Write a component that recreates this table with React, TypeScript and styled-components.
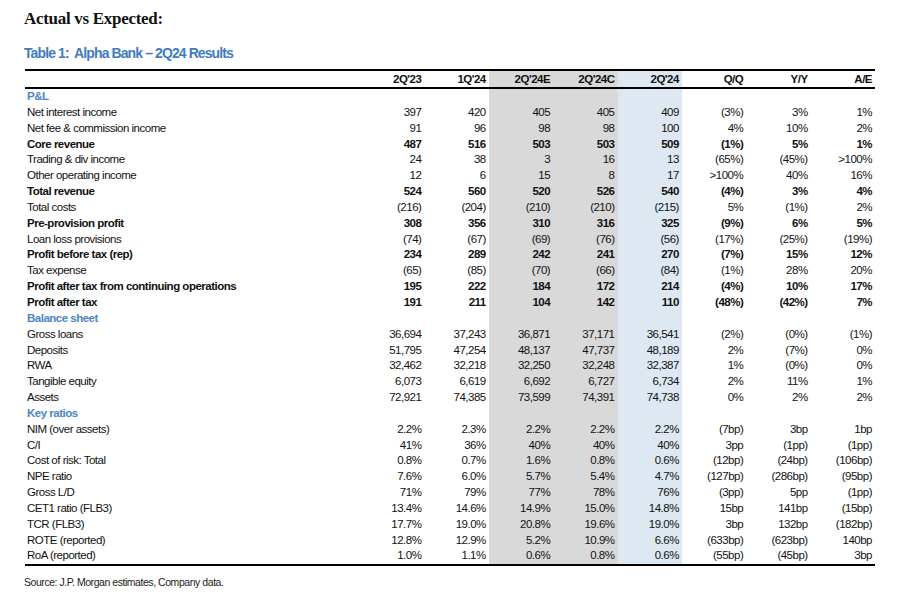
import styled, { createGlobalStyle } from 'styled-components';

type Shade = 'grey' | 'blue' | undefined;

type Row =
  | { kind: 'section'; label: string }
  | { kind: 'data'; label: string; values: string[]; bold?: boolean };

const columns = ["2Q'23", "1Q'24", "2Q'24E", "2Q'24C", "2Q'24", 'Q/Q', 'Y/Y', 'A/E'];

// columns 2 and 3 are the estimate block, 4 is the actual quarter
const shadeFor = (i: number): Shade => (i === 2 || i === 3 ? 'grey' : i === 4 ? 'blue' : undefined);

const rows: Row[] = [
  { kind: 'section', label: 'P&L' },
  { kind: 'data', label: 'Net interest income', values: ['397', '420', '405', '405', '409', '(3%)', '3%', '1%'] },
  { kind: 'data', label: 'Net fee & commission income', values: ['91', '96', '98', '98', '100', '4%', '10%', '2%'] },
  { kind: 'data', label: 'Core revenue', bold: true, values: ['487', '516', '503', '503', '509', '(1%)', '5%', '1%'] },
  { kind: 'data', label: 'Trading & div income', values: ['24', '38', '3', '16', '13', '(65%)', '(45%)', '>100%'] },
  { kind: 'data', label: 'Other operating income', values: ['12', '6', '15', '8', '17', '>100%', '40%', '16%'] },
  { kind: 'data', label: 'Total revenue', bold: true, values: ['524', '560', '520', '526', '540', '(4%)', '3%', '4%'] },
  { kind: 'data', label: 'Total costs', values: ['(216)', '(204)', '(210)', '(210)', '(215)', '5%', '(1%)', '2%'] },
  { kind: 'data', label: 'Pre-provision profit', bold: true, values: ['308', '356', '310', '316', '325', '(9%)', '6%', '5%'] },
  { kind: 'data', label: 'Loan loss provisions', values: ['(74)', '(67)', '(69)', '(76)', '(56)', '(17%)', '(25%)', '(19%)'] },
  { kind: 'data', label: 'Profit before tax (rep)', bold: true, values: ['234', '289', '242', '241', '270', '(7%)', '15%', '12%'] },
  { kind: 'data', label: 'Tax expense', values: ['(65)', '(85)', '(70)', '(66)', '(84)', '(1%)', '28%', '20%'] },
  { kind: 'data', label: 'Profit after tax from continuing operations', bold: true, values: ['195', '222', '184', '172', '214', '(4%)', '10%', '17%'] },
  { kind: 'data', label: 'Profit after tax', bold: true, values: ['191', '211', '104', '142', '110', '(48%)', '(42%)', '7%'] },
  { kind: 'section', label: 'Balance sheet' },
  { kind: 'data', label: 'Gross loans', values: ['36,694', '37,243', '36,871', '37,171', '36,541', '(2%)', '(0%)', '(1%)'] },
  { kind: 'data', label: 'Deposits', values: ['51,795', '47,254', '48,137', '47,737', '48,189', '2%', '(7%)', '0%'] },
  { kind: 'data', label: 'RWA', values: ['32,462', '32,218', '32,250', '32,248', '32,387', '1%', '(0%)', '0%'] },
  { kind: 'data', label: 'Tangible equity', values: ['6,073', '6,619', '6,692', '6,727', '6,734', '2%', '11%', '1%'] },
  { kind: 'data', label: 'Assets', values: ['72,921', '74,385', '73,599', '74,391', '74,738', '0%', '2%', '2%'] },
  { kind: 'section', label: 'Key ratios' },
  { kind: 'data', label: 'NIM (over assets)', values: ['2.2%', '2.3%', '2.2%', '2.2%', '2.2%', '(7bp)', '3bp', '1bp'] },
  { kind: 'data', label: 'C/I', values: ['41%', '36%', '40%', '40%', '40%', '3pp', '(1pp)', '(1pp)'] },
  { kind: 'data', label: 'Cost of risk: Total', values: ['0.8%', '0.7%', '1.6%', '0.8%', '0.6%', '(12bp)', '(24bp)', '(106bp)'] },
  { kind: 'data', label: 'NPE ratio', values: ['7.6%', '6.0%', '5.7%', '5.4%', '4.7%', '(127bp)', '(286bp)', '(95bp)'] },
  { kind: 'data', label: 'Gross L/D', values: ['71%', '79%', '77%', '78%', '76%', '(3pp)', '5pp', '(1pp)'] },
  { kind: 'data', label: 'CET1 ratio (FLB3)', values: ['13.4%', '14.6%', '14.9%', '15.0%', '14.8%', '15bp', '141bp', '(15bp)'] },
  { kind: 'data', label: 'TCR (FLB3)', values: ['17.7%', '19.0%', '20.8%', '19.6%', '19.0%', '3bp', '132bp', '(182bp)'] },
  { kind: 'data', label: 'ROTE (reported)', values: ['12.8%', '12.9%', '5.2%', '10.9%', '6.6%', '(633bp)', '(623bp)', '140bp'] },
  { kind: 'data', label: 'RoA (reported)', values: ['1.0%', '1.1%', '0.6%', '0.8%', '0.6%', '(55bp)', '(45bp)', '3bp'] },
];

function App() {
  return (
    <>
      <GlobalStyle />
      <Page>
        <Heading>Actual vs Expected:</Heading>
        <Caption>Table 1:&nbsp; Alpha Bank – 2Q24 Results</Caption>
        <Table>
          <colgroup>
            <col style={{ width: 335 }} />
            {columns.map((c) => (
              <col key={c} />
            ))}
          </colgroup>
          <thead>
            <tr>
              <HeadCell />
              {columns.map((c, i) => (
                <HeadCell key={c} $shade={shadeFor(i)}>
                  {c}
                </HeadCell>
              ))}
            </tr>
          </thead>
          <tbody>
            {rows.map((row) =>
              row.kind === 'section' ? (
                <tr key={row.label}>
                  <SectionCell>{row.label}</SectionCell>
                  {columns.map((c, i) => (
                    <Cell key={c} $shade={shadeFor(i)} />
                  ))}
                </tr>
              ) : (
                <tr key={row.label}>
                  <LabelCell $bold={row.bold}>{row.label}</LabelCell>
                  {row.values.map((v, i) => (
                    <Cell key={i} $shade={shadeFor(i)} $bold={row.bold}>
                      {v}
                    </Cell>
                  ))}
                </tr>
              )
            )}
          </tbody>
        </Table>
        <Source>Source: J.P. Morgan estimates, Company data.</Source>
      </Page>
    </>
  );
}

export default App;

const GlobalStyle = createGlobalStyle`
  html, body {
    margin: 0;
    background: #fff;
  }
  body {
    font-family: "Liberation Sans", Arial, sans-serif;
    color: #111;
  }
`;

const Page = styled.div`
  width: 901px;
  padding: 8px 0 0 24px;
  box-sizing: border-box;
`;

const Heading = styled.h1`
  margin: 0;
  font-family: "Liberation Serif", "Times New Roman", serif;
  font-size: 17px;
  line-height: 21px;
  letter-spacing: -0.3px;
  font-weight: bold;
  color: #111;
`;

const Caption = styled.div`
  margin-top: 15px;
  font-size: 14px;
  line-height: 18px;
  letter-spacing: -0.9px;
  font-weight: bold;
  color: #3f7cbe;
`;

// the source uses a narrow face; tighten Arial metrics to keep the same widths
const Table = styled.table`
  margin: 7px 0 0 1px;
  width: 850px;
  table-layout: fixed;
  border-collapse: collapse;
  border-top: 2px solid #000;
  border-bottom: 2px solid #000;
  font-size: 11.5px;
  letter-spacing: -0.5px;
`;

const bg = (s: Shade) => (s === 'grey' ? '#d9d9d9' : s === 'blue' ? '#dde8f3' : 'transparent');

const HeadCell = styled.th<{ $shade?: Shade }>`
  height: 15px;
  padding: 1px 3px 0 0;
  line-height: 15px;
  text-align: right;
  font-weight: bold;
  background: ${(p) => bg(p.$shade)};
  border-bottom: 2px solid #000;
  white-space: nowrap;
`;

const Cell = styled.td<{ $shade?: Shade; $bold?: boolean }>`
  height: 15.85px;
  padding: 0 3px 0 0;
  line-height: 15.85px;
  text-align: right;
  font-weight: ${(p) => (p.$bold ? 'bold' : 'normal')};
  background: ${(p) => bg(p.$shade)};
  white-space: nowrap;
`;

const LabelCell = styled.td<{ $bold?: boolean }>`
  height: 15.85px;
  padding: 0 0 0 2px;
  line-height: 15.85px;
  text-align: left;
  font-weight: ${(p) => (p.$bold ? 'bold' : 'normal')};
  white-space: nowrap;
`;

const SectionCell = styled(LabelCell)`
  font-weight: bold;
  color: #4a86c5;
`;

const Source = styled.div`
  margin-top: 10px;
  font-size: 10.5px;
  line-height: 13px;
  letter-spacing: -0.45px;
  color: #222;
`;
